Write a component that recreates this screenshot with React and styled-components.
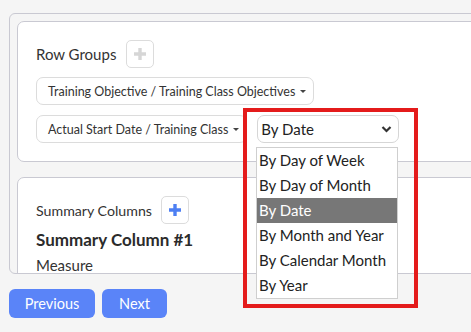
import React from "react";
import styled, { createGlobalStyle } from "styled-components";

const Global = createGlobalStyle`
  html, body { margin: 0; padding: 0; background: #f5f5f5; overflow: hidden; }
  body { font-family: Lato, "Open Sans", sans-serif; color: #333; }
`;

const Page = styled.div`
  position: relative;
  width: 471px;
  height: 332px;
  padding: 13px 0 0 9px;
  box-sizing: border-box;
  overflow: hidden;
`;

const Outer = styled.div`
  width: 540px;
  height: 261px;
  box-sizing: border-box;
  border: 1px solid #c9c9d2;
  border-radius: 6px;
  background: #f5f5f5;
  padding: 7px 0 0 7px;
  overflow: hidden;
  display: flex;
  flex-direction: column;
  gap: 15px;
`;

const Card = styled.div`
  background: #fff;
  border: 1px solid #c9c9d2;
  border-radius: 7px;
  padding: 18px;
  display: flex;
  flex-direction: column;
  flex-shrink: 0;
  height: ${(p) => p.$h || "auto"};
  box-sizing: border-box;
`;

const HeadRow = styled.div`
  display: flex;
  align-items: center;
  gap: ${(p) => p.$gap || 10}px;
  font-size: ${(p) => p.$size || 15}px;
  color: #333;
`;

const PlusBtn = styled.div`
  width: 28px;
  height: 28px;
  box-sizing: border-box;
  border: 1px solid #dcdcdc;
  border-radius: 5px;
  background: #fff;
  display: flex;
  align-items: center;
  justify-content: center;
`;

const PillRow = styled.div`
  display: flex;
  align-items: center;
  gap: 10px;
  margin-top: ${(p) => p.$mt}px;
`;

const Pill = styled.div`
  height: 28px;
  box-sizing: border-box;
  border: 1px solid #dcdcdc;
  border-radius: 7px;
  padding: 0 7px 0 11px;
  display: inline-flex;
  align-items: center;
  gap: 5px;
  font-size: 12.5px;
  color: #333;
  white-space: nowrap;
`;

const Caret = styled.span`
  width: 0;
  height: 0;
  border-left: 3px solid transparent;
  border-right: 3px solid transparent;
  border-top: 3px solid #444;
  margin-top: 1px;
`;

const SelectBox = styled.div`
  width: 142px;
  height: 28px;
  box-sizing: border-box;
  border: 1px solid #d6d6d6;
  border-radius: 7px;
  padding: 0 6px 0 3px;
  display: flex;
  align-items: center;
  justify-content: space-between;
  font-size: 15px;
  color: #222;
`;

const SectionTitle = styled.div`
  font-size: 17px;
  font-weight: 700;
  color: #2b2b2b;
  margin-top: 5px;
`;

const Label = styled.div`
  font-size: 15px;
  color: #333;
  margin-top: 6px;
`;

const Footer = styled.div`
  display: flex;
  gap: 7px;
  margin-top: 15px;
`;

const Button = styled.button`
  height: 29px;
  width: ${(p) => p.$w}px;
  border: none;
  border-radius: 6px;
  background: #5a84f8;
  color: #fff;
  font-family: Lato, sans-serif;
  font-size: 14.5px;
  padding: 0;
`;

const Dropdown = styled.ul`
  position: absolute;
  left: 256px;
  top: 147px;
  width: 142px;
  margin: 0;
  padding: 0;
  list-style: none;
  box-sizing: border-box;
  border: 1px solid #cfcfcf;
  background: #fff;
`;

const Option = styled.li`
  height: 25px;
  line-height: 25px;
  padding-left: 2px;
  font-size: 15px;
  color: ${(p) => (p.$active ? "#fff" : "#222")};
  background: ${(p) => (p.$active ? "#777" : "transparent")};
  white-space: nowrap;
`;

const Highlight = styled.div`
  position: absolute;
  left: 243px;
  top: 108px;
  width: 175px;
  height: 200px;
  box-sizing: border-box;
  border: 4px solid #e41b1b;
  pointer-events: none;
`;

const Plus = ({ color }) => (
  <svg width="16" height="16" viewBox="0 0 16 16">
    <path d="M8 2v12M2 8h12" stroke={color} strokeWidth="3.4" />
  </svg>
);

const Chevron = () => (
  <svg width="11" height="8" viewBox="0 0 11 8">
    <path d="M1.5 2l4 4 4-4" stroke="#333" strokeWidth="2.2" fill="none" />
  </svg>
);

const options = [
  "By Day of Week",
  "By Day of Month",
  "By Date",
  "By Month and Year",
  "By Calendar Month",
  "By Year",
];

export default function App() {
  return (
    <>
      <Global />
      <Page>
        <Outer>
          <Card $h="141px">
            <HeadRow>
              <span>Row Groups</span>
              <PlusBtn>
                <Plus color="#d6d6d6" />
              </PlusBtn>
            </HeadRow>
            <PillRow $mt={9}>
              <Pill>
                Training Objective / Training Class Objectives <Caret />
              </Pill>
            </PillRow>
            <PillRow $mt={10}>
              <Pill>
                Actual Start Date / Training Class <Caret />
              </Pill>
              <SelectBox>
                <span>By Date</span>
                <Chevron />
              </SelectBox>
            </PillRow>
          </Card>
          <Card>
            <HeadRow $size={14.2} $gap={9}>
              <span>Summary Columns</span>
              <PlusBtn>
                <Plus color="#4d7ff3" />
              </PlusBtn>
            </HeadRow>
            <SectionTitle>Summary Column #1</SectionTitle>
            <Label>Measure</Label>
          </Card>
        </Outer>
        <Footer>
          <Button $w={86}>Previous</Button>
          <Button $w={65}>Next</Button>
        </Footer>
        <Dropdown>
          {options.map((o) => (
            <Option key={o} $active={o === "By Date"}>
              {o}
            </Option>
          ))}
        </Dropdown>
        <Highlight />
      </Page>
    </>
  );
}
